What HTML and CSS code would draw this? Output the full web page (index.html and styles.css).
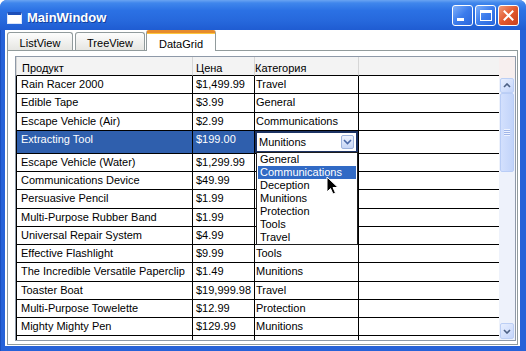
FILE: index.html
```html
<!DOCTYPE html>
<html lang="ru">

<head>
    <meta charset="UTF-8" />
    <title>MainWindow</title>
    <link rel="stylesheet" href="styles.css">
</head>

<body>
    <div class="window">
        <!-- Title bar -->
        <div class="titlebar">
            <div class="app-icon"></div>
            <span class="title">MainWindow</span>
            <div class="caption-buttons">
                <div class="cap-btn cap-min"><span></span></div>
                <div class="cap-btn cap-max"><span></span></div>
                <div class="cap-btn cap-close">
                    <svg width="11" height="11" viewBox="0 0 11 11">
                        <path d="M1.5 1.5 L9.5 9.5 M9.5 1.5 L1.5 9.5" stroke="#fff" stroke-width="2" stroke-linecap="square" />
                    </svg>
                </div>
            </div>
        </div>

        <div class="frame">
            <div class="client">
                <!-- Tabs -->
                <div class="tabs">
                    <div class="tab tab-list">ListView</div>
                    <div class="tab tab-tree">TreeView</div>
                    <div class="tab tab-grid active">DataGrid</div>
                </div>

                <div class="panel">
                    <div class="grid">
                        <div class="grid-main">
                            <div class="row header">
                                <div class="cell c1">Продукт</div>
                                <div class="cell c2">Цена</div>
                                <div class="cell c3">Категория</div>
                                <div class="cell c4"></div>
                            </div>
                            <div class="row">
                                <div class="cell c1">Rain Racer 2000</div>
                                <div class="cell c2">$1,499.99</div>
                                <div class="cell c3">Travel</div>
                                <div class="cell c4"></div>
                            </div>
                            <div class="row">
                                <div class="cell c1">Edible Tape</div>
                                <div class="cell c2">$3.99</div>
                                <div class="cell c3">General</div>
                                <div class="cell c4"></div>
                            </div>
                            <div class="row">
                                <div class="cell c1">Escape Vehicle (Air)</div>
                                <div class="cell c2">$2.99</div>
                                <div class="cell c3">Communications</div>
                                <div class="cell c4"></div>
                            </div>
                            <div class="row selected">
                                <div class="cell c1">Extracting Tool</div>
                                <div class="cell c2">$199.00</div>
                                <div class="cell c3">
                                    <div class="combo">
                                        <span>Munitions</span>
                                        <div class="combo-btn">
                                            <svg width="9" height="6" viewBox="0 0 9 6">
                                                <path d="M1 1 L4.5 4.5 L8 1" fill="none" stroke="#4a69a8" stroke-width="1.6" />
                                            </svg>
                                        </div>
                                    </div>
                                </div>
                                <div class="cell c4"></div>
                            </div>
                            <!-- category cells below are covered by the open list -->
                            <div class="row">
                                <div class="cell c1">Escape Vehicle (Water)</div>
                                <div class="cell c2">$1,299.99</div>
                                <div class="cell c3"></div>
                                <div class="cell c4"></div>
                            </div>
                            <div class="row">
                                <div class="cell c1">Communications Device</div>
                                <div class="cell c2">$49.99</div>
                                <div class="cell c3"></div>
                                <div class="cell c4"></div>
                            </div>
                            <div class="row">
                                <div class="cell c1">Persuasive Pencil</div>
                                <div class="cell c2">$1.99</div>
                                <div class="cell c3"></div>
                                <div class="cell c4"></div>
                            </div>
                            <div class="row">
                                <div class="cell c1">Multi-Purpose Rubber Band</div>
                                <div class="cell c2">$1.99</div>
                                <div class="cell c3"></div>
                                <div class="cell c4"></div>
                            </div>
                            <div class="row">
                                <div class="cell c1">Universal Repair System</div>
                                <div class="cell c2">$4.99</div>
                                <div class="cell c3"></div>
                                <div class="cell c4"></div>
                            </div>
                            <div class="row">
                                <div class="cell c1">Effective Flashlight</div>
                                <div class="cell c2">$9.99</div>
                                <div class="cell c3">Tools</div>
                                <div class="cell c4"></div>
                            </div>
                            <div class="row">
                                <div class="cell c1">The Incredible Versatile Paperclip</div>
                                <div class="cell c2">$1.49</div>
                                <div class="cell c3">Munitions</div>
                                <div class="cell c4"></div>
                            </div>
                            <div class="row">
                                <div class="cell c1">Toaster Boat</div>
                                <div class="cell c2">$19,999.98</div>
                                <div class="cell c3">Travel</div>
                                <div class="cell c4"></div>
                            </div>
                            <div class="row">
                                <div class="cell c1">Multi-Purpose Towelette</div>
                                <div class="cell c2">$12.99</div>
                                <div class="cell c3">Protection</div>
                                <div class="cell c4"></div>
                            </div>
                            <div class="row">
                                <div class="cell c1">Mighty Mighty Pen</div>
                                <div class="cell c2">$129.99</div>
                                <div class="cell c3">Munitions</div>
                                <div class="cell c4"></div>
                            </div>
                            <div class="row">
                                <div class="cell c1">Perfect-Vision Glasses</div>
                                <div class="cell c2">$129.99</div>
                                <div class="cell c3">Protection</div>
                                <div class="cell c4"></div>
                            </div>
                        </div>

                        <!-- Scrollbar -->
                        <div class="grid-side">
                            <div class="corner"></div>
                            <div class="scrollbar">
                                <div class="sb-btn sb-up">
                                    <svg width="8" height="5" viewBox="0 0 8 5">
                                        <path d="M1 4 L4 1 L7 4" fill="none" stroke="#4d6185" stroke-width="1.6" />
                                    </svg>
                                </div>
                                <div class="sb-thumb"><span class="grip"></span></div>
                                <div class="sb-track"></div>
                                <div class="sb-btn sb-down">
                                    <svg width="8" height="5" viewBox="0 0 8 5">
                                        <path d="M1 1 L4 4 L7 1" fill="none" stroke="#4d6185" stroke-width="1.6" />
                                    </svg>
                                </div>
                            </div>
                        </div>

                        <!-- Open combobox list -->
                        <div class="dropdown">
                            <div class="opt">General</div>
                            <div class="opt hover">Communications</div>
                            <div class="opt">Deception</div>
                            <div class="opt">Munitions</div>
                            <div class="opt">Protection</div>
                            <div class="opt">Tools</div>
                            <div class="opt">Travel</div>
                        </div>

                        <svg class="cursor" width="13" height="20" viewBox="0 0 13 20">
                            <path d="M1 1 V16 L4.5 12.5 L7 18 L9.5 17 L7 11.5 H12 Z" fill="#000" stroke="#fff" stroke-width="1" stroke-linejoin="miter" />
                        </svg>
                    </div>
                </div>
            </div>
        </div>
    </div>
</body>

</html>
```

FILE: styles.css
```css
* {
    box-sizing: border-box;
    margin: 0;
    padding: 0;
}

body {
    width: 526px;
    height: 351px;
    overflow: hidden;
    background: #fff;
    font-family: "Liberation Sans", Arial, sans-serif;
    font-size: 11px;
    color: #000;
}

.window {
    width: 526px;
    height: 351px;
    display: flex;
    flex-direction: column;
    background: #2662d8;
    border-radius: 7px 7px 0 0;
    overflow: hidden;
}

/* Title bar */
.titlebar {
    height: 30px;
    flex-shrink: 0;
    display: flex;
    align-items: flex-start;
    padding: 0 7px;
    background: linear-gradient(#6aa4f2 0%, #3f86ec 10%, #2b71e4 35%, #2668dc 70%, #1f5cd2 100%);
}

.app-icon {
    width: 15px;
    height: 12px;
    margin-top: 12px;
    background: #fff;
    border: 1px solid #d8e4fb;
    border-top: 3px solid #1d4fb8;
}

.title {
    margin: 10px 0 0 5px;
    color: #fff;
    font-size: 13px;
    font-weight: bold;
    line-height: 16px;
    text-shadow: 1px 1px 0 #12409e;
}

.caption-buttons {
    margin: 5px 0 0 auto;
    display: flex;
    gap: 2px;
}

.cap-btn {
    width: 21px;
    height: 21px;
    border: 1px solid #fff;
    border-radius: 3px;
    background: linear-gradient(135deg, #7fb0fa 0%, #3c7cec 50%, #2a66dc 100%);
    position: relative;
    display: flex;
    align-items: center;
    justify-content: center;
}

.cap-min span {
    position: absolute;
    left: 4px;
    bottom: 4px;
    width: 7px;
    height: 3px;
    background: #fff;
}

.cap-max span {
    width: 12px;
    height: 11px;
    border: 1px solid #fff;
    border-top-width: 3px;
}

.cap-close {
    background: linear-gradient(135deg, #f29a78 0%, #e2582e 50%, #c8401e 100%);
}

/* Frame + client */
.frame {
    flex: 1;
    min-height: 0;
    display: flex;
    padding: 0 6px 5px 4px;
    border-left: 1px solid #1a4fbf;
}

.client {
    flex: 1;
    min-height: 0;
    display: flex;
    flex-direction: column;
    background: #fff;
}

/* Tabs */
.tabs {
    height: 20px;
    flex-shrink: 0;
    display: flex;
    align-items: flex-end;
    gap: 2px;
    padding-left: 2px;
}

.tab {
    height: 18px;
    padding-top: 3px;
    line-height: 14px;
    text-align: center;
    border: 1px solid #919b9c;
    border-bottom: none;
    border-radius: 3px 3px 0 0;
    background: linear-gradient(#fdfdfd, #e6e6e2);
}

.tab-list {
    width: 66px;
}

.tab-tree,
.tab-grid {
    width: 70px;
}

.tab.active {
    height: 21px;
    margin: 0 0 -1px -1px;
    padding-top: 4px;
    border-top: 3px solid #e68b2c;
    background: #fff;
    box-shadow: inset 0 1px 0 #ffc73c;
    position: relative;
    z-index: 1;
}

.panel {
    flex: 1;
    min-height: 0;
    display: flex;
    margin: 0 2px 1px 2px;
    padding: 5px 1px 3px 7px;
    border: 1px solid #919b9c;
    background: #fff;
}

/* Data grid */
.grid {
    flex: 1;
    min-height: 0;
    display: flex;
    position: relative;
    border: 1px solid #8e99a8;
    background: #fff;
}

.grid-main {
    flex: 1;
    min-height: 0;
    overflow: hidden;
}

.row {
    display: grid;
    grid-template-columns: 177px 62px 104px 1fr;
    height: 18.25px;
}

.cell {
    border-right: 1px solid #000;
    border-bottom: 1px solid #000;
    line-height: 17px;
    white-space: nowrap;
    overflow: hidden;
}

.c1 {
    border-left: 1px solid #000;
    padding-left: 4px;
}

.c2 {
    padding-left: 3px;
}

.c3 {
    padding-left: 1px;
}

.c4 {
    border-right: none;
}

.header {
    height: 19px;
    background: #f3f3f3;
}

.header .cell {
    border-right-color: #d6d6d6;
    padding-top: 4px;
    line-height: 14px;
}

.header .c1 {
    border-left-color: #d6d6d6;
    padding-left: 5px;
}

.header .c3 {
    padding-left: 0;
}

.row.selected {
    height: 23px;
}

.selected .c1,
.selected .c2 {
    background: #2f5fad;
    color: #fff;
}

.selected .c3 {
    padding: 0;
}

.combo {
    height: 100%;
    display: flex;
    align-items: center;
    padding-left: 2px;
    border: 2px solid #1b3263;
    background: #fff;
    line-height: 18px;
}

.combo-btn {
    width: 13px;
    height: 14px;
    margin: 0 2px 0 auto;
    display: flex;
    align-items: center;
    justify-content: center;
    border: 1px solid #9db3dd;
    border-radius: 2px;
    background: linear-gradient(#eef3fd, #c6d6f6);
}

/* Scrollbar */
.grid-side {
    width: 16px;
    display: flex;
    flex-direction: column;
}

.corner {
    height: 21px;
    flex-shrink: 0;
    background: #f7efef;
}

.scrollbar {
    flex: 1;
    min-height: 0;
    display: flex;
    flex-direction: column;
    background: #eef2fb;
}

.sb-btn {
    flex-shrink: 0;
    margin: 0 1px;
    display: flex;
    align-items: center;
    justify-content: center;
    border: 1px solid #bccff5;
    border-radius: 2px;
    background: linear-gradient(135deg, #e8effe, #c4d5fb);
}

.sb-up {
    height: 15px;
}

.sb-down {
    height: 16px;
    margin-bottom: 1px;
}

.sb-thumb {
    height: 79px;
    flex-shrink: 0;
    margin: 0 1px;
    display: flex;
    align-items: center;
    justify-content: center;
    border: 1px solid #b9cdf6;
    border-radius: 2px;
    background: linear-gradient(to right, #d3e0fd, #c2d4fa);
}

.grip {
    width: 6px;
    height: 7px;
    background: repeating-linear-gradient(#eef3ff 0 1px, #9fb5e8 1px 2px);
}

.sb-track {
    flex: 1;
}

/* Dropdown list of the open combobox */
.dropdown {
    position: absolute;
    left: 240px;
    top: 95px;
    width: 102px;
    height: 93px;
    border: 1px solid #1e1e1e;
    background: #fff;
    z-index: 2;
}

.opt {
    margin: 0 1px;
    padding-left: 2px;
    line-height: 13px;
}

.opt.hover {
    background: #316ac5;
    color: #fff;
}

.cursor {
    position: absolute;
    left: 310px;
    top: 119px;
    z-index: 3;
}
```
